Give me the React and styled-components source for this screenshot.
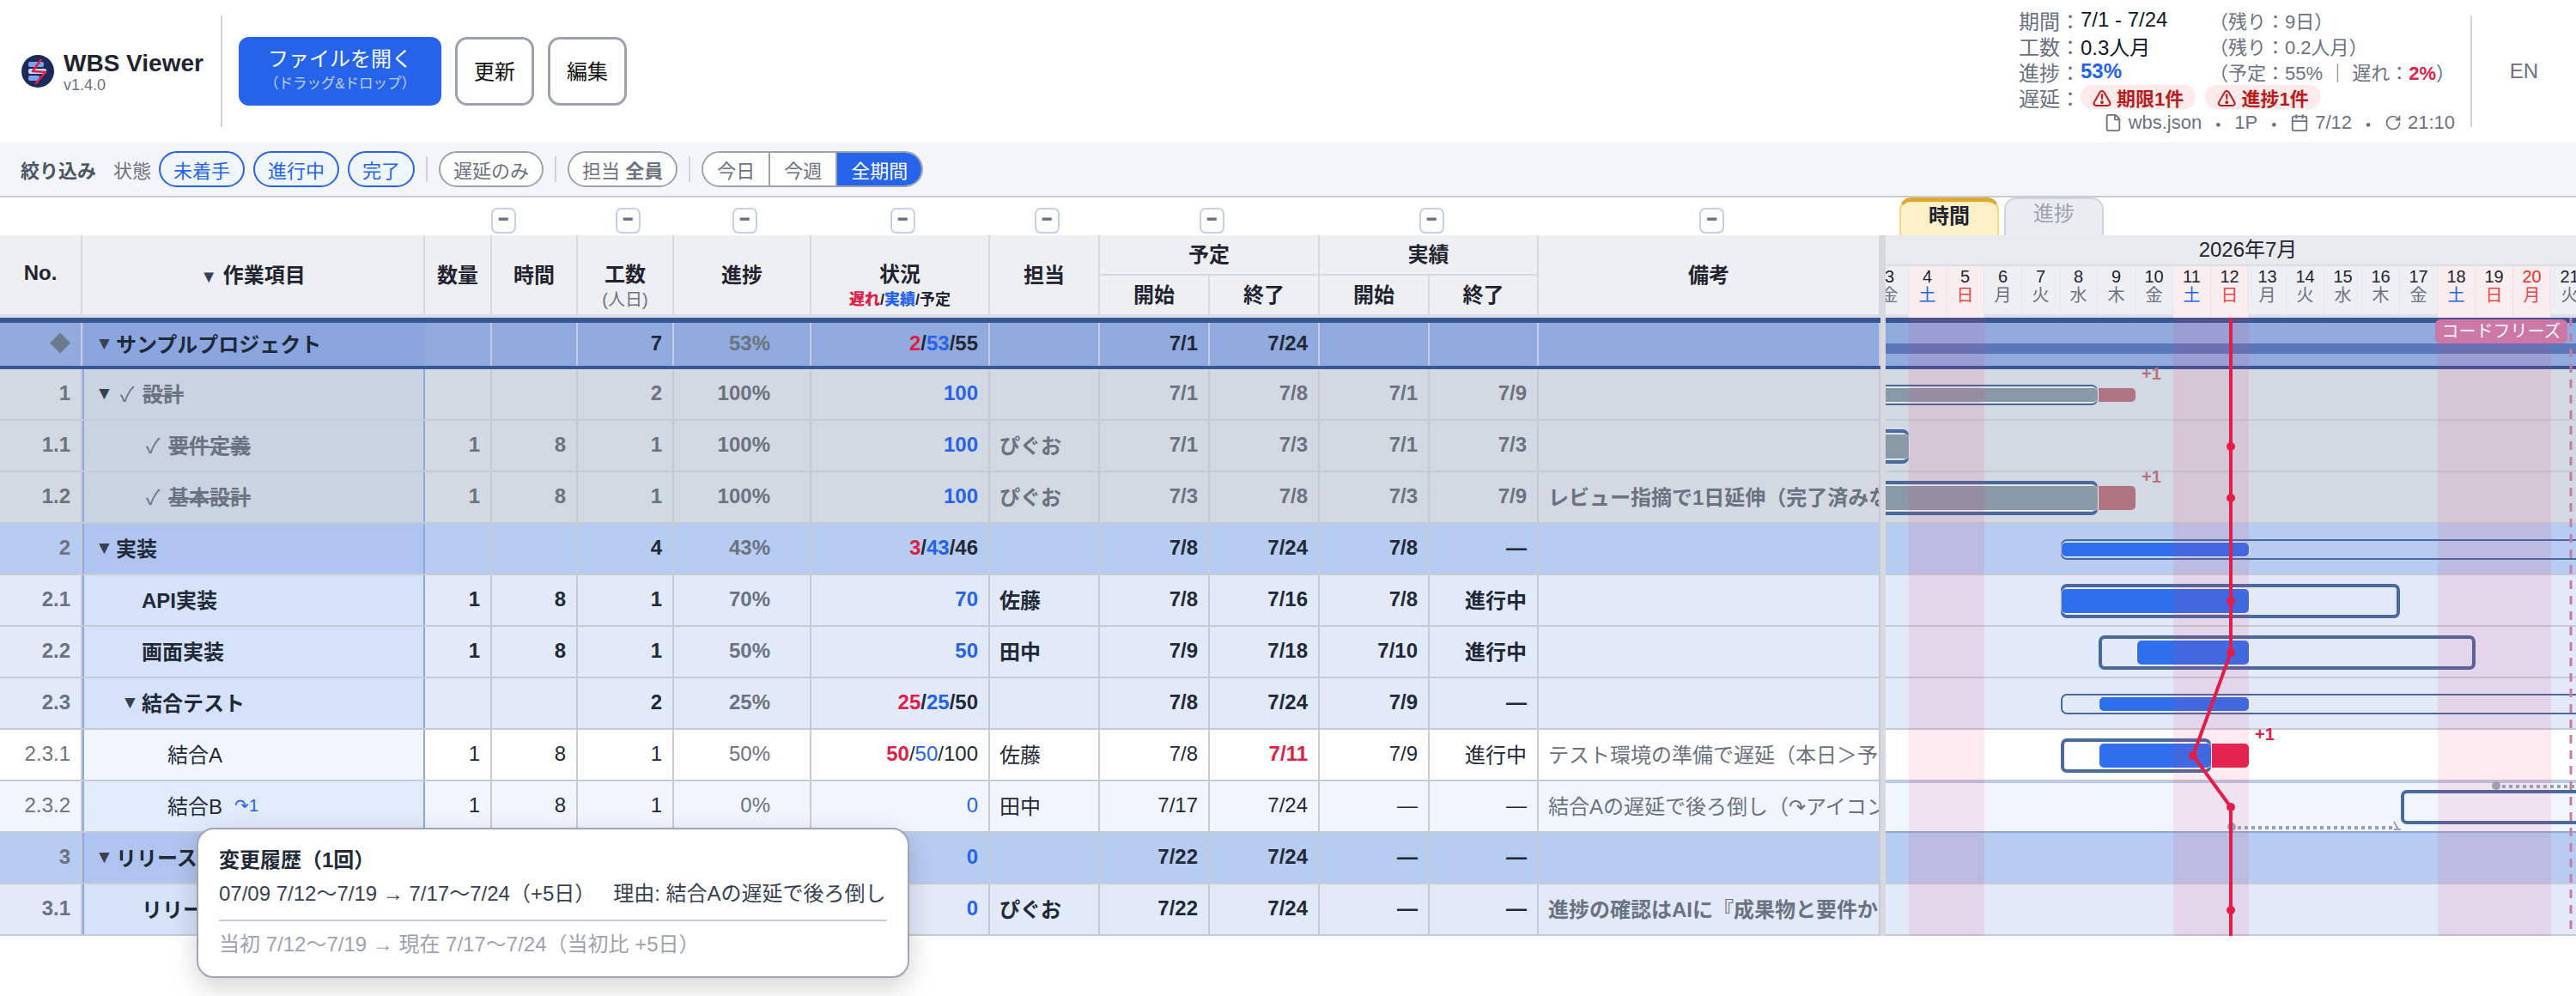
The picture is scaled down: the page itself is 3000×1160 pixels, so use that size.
import styled, { createGlobalStyle } from 'styled-components';
import { Calendar, File, RotateCw } from 'lucide-react';

const COLS = '96px 399px 78px 100px 112px 160px 208px 128px 128px 128px 128px 127px 1fr';

// 行の種類ごとの背景色
const ROW_THEME = {
    project: { bg: '#91abdf', item: '#8ba6df', line: '#c3cde4', text: '#1f2937' },
    done: { bg: '#d3d9e2', item: '#c9d3e2', line: '#c6cad5', text: '#6b7280' },
    group: { bg: '#b7ccf1', item: '#afc5ef', line: '#c6cad5', text: '#1f2937' },
    task: { bg: '#e2e9f9', item: '#d5e2fa', line: '#c6cad5', text: '#1f2937' },
    leaf: { bg: '#ffffff', item: '#f1f6fe', line: '#c6cad5', text: '#1f2937' },
    leafAlt: { bg: '#f1f6fe', item: '#e2ebfb', line: '#c6cad5', text: '#1f2937' },
};

const DAY_NAMES = ['金', '土', '日', '月', '火', '水', '木'];
const HOLIDAYS = [20];

const xOf = (day) => 44 * day - 149;

const GlobalStyle = createGlobalStyle`
    html, body {
        margin: 0;
        background: #fff;
    }
    body {
        font-family: "Liberation Sans", "Noto Sans CJK JP", sans-serif;
        font-size: 24px;
        color: #1f2937;
    }
    * {
        box-sizing: border-box;
    }
`;

const Page = styled.div`
    position: relative;
    width: 3000px;
    height: 1160px;
    overflow: hidden;
`;

const Header = styled.header`
    display: flex;
    align-items: center;
    height: 166px;
`;

const Brand = styled.div`
    display: flex;
    align-items: center;
    gap: 11px;
    width: 257px;
    padding-left: 25px;
`;

const BrandText = styled.div`
    display: flex;
    flex-direction: column;
`;

const BrandName = styled.div`
    font-size: 28px;
    font-weight: 700;
    line-height: 32px;
    color: #1f2430;
`;

const BrandVersion = styled.div`
    font-size: 18px;
    line-height: 18px;
    color: #6b7280;
`;

const VDivider = styled.div`
    flex: none;
    width: 2px;
    height: 130px;
    background: #d1d5db;
`;

const HeaderActions = styled.div`
    display: flex;
    gap: 16px;
    margin-left: 19px;
`;

const OpenButton = styled.button`
    display: flex;
    flex-direction: column;
    align-items: center;
    justify-content: center;
    width: 236px;
    height: 80px;
    padding: 0 0 4px;
    border: none;
    border-radius: 12px;
    background: #2563eb;
    color: #fff;
    font: inherit;
    line-height: 32px;
`;

const OpenHint = styled.span`
    font-size: 16.5px;
    line-height: 24px;
    opacity: 0.7;
`;

const PlainButton = styled.button`
    width: 92px;
    height: 80px;
    padding: 0 0 3px;
    border: 3px solid #9ca3af;
    border-radius: 14px;
    background: #fff;
    color: #111;
    font: inherit;
`;

const Summary = styled.div`
    display: grid;
    grid-template-columns: 72px 150px 1fr;
    grid-auto-rows: 30px;
    align-items: center;
    width: 506px;
    margin-left: auto;
    margin-right: 20px;
    white-space: nowrap;
`;

const SummaryLabel = styled.span`
    color: #6b7280;
`;

const SummaryValue = styled.span`
    color: #111827;
`;

const SummaryNote = styled.span`
    font-size: 22px;
    color: #6b7280;
`;

const Accent = styled.b`
    color: ${(props) => props.$color};
`;

const PillRow = styled.div`
    display: flex;
    gap: 11px;
    grid-column: 2 / 4;
`;

const Pill = styled.span`
    display: flex;
    align-items: center;
    gap: 6px;
    height: 28px;
    padding: 0 14px;
    border-radius: 14px;
    background: #fdeaea;
    color: #b91c1c;
    font-size: 22px;
    font-weight: 700;
`;

const MetaRow = styled.div`
    display: flex;
    align-items: center;
    justify-content: flex-end;
    gap: 7px;
    grid-column: 1 / 4;
    font-size: 22px;
    color: #6b7280;
`;

const MetaDot = styled.span`
    margin: 0 1px;
`;

const LangSwitch = styled.div`
    flex: none;
    width: 121px;
    text-align: center;
    color: #6b7280;
`;

const FilterBar = styled.div`
    display: flex;
    align-items: center;
    height: 64px;
    padding-left: 24px;
    border-bottom: 2px solid #c8cad4;
    background: #f4f5f9;
    font-size: 22px;
    white-space: nowrap;
`;

const FilterTitle = styled.b`
    width: 108px;
    color: #4b5563;
`;

const FilterLabel = styled.span`
    width: 53px;
    color: #6b7280;
`;

const Chip = styled.span`
    display: flex;
    align-items: center;
    height: 42px;
    margin-right: 10px;
    padding: 0 15px;
    border: 2px solid ${(props) => (props.$active ? '#2563eb' : '#9ca3af')};
    border-radius: 21px;
    background: ${(props) => (props.$active ? '#eff6ff' : '#fff')};
    color: ${(props) => (props.$active ? '#2563eb' : '#6b7280')};
`;

const FilterDivider = styled.span`
    width: 2px;
    height: 30px;
    margin: 0 13px 0 3px;
    background: #d1d5db;
`;

const Segments = styled.div`
    display: flex;
    height: 42px;
    border: 2px solid #9ca3af;
    border-radius: 21px;
    overflow: hidden;
`;

const Segment = styled.span`
    display: flex;
    align-items: center;
    padding: 0 16px;
    border-right: 2px solid #9ca3af;
    background: ${(props) => (props.$active ? '#2563eb' : '#fff')};
    color: ${(props) => (props.$active ? '#fff' : '#6b7280')};

    &:last-child {
        border-right: none;
    }
`;

const Main = styled.div`
    display: flex;
    align-items: flex-start;
`;

const TableSide = styled.div`
    width: 2190px;
`;

const Splitter = styled.div`
    width: 6px;
    height: 816px;
    margin-top: 44px;
    background: #d7d9df;
`;

const CollapseRow = styled.div`
    display: grid;
    grid-template-columns: 495px 178px 112px 160px 208px 128px 256px 256px 1fr;
    align-items: center;
    height: 44px;
    padding-top: 10px;
`;

const CollapseButton = styled.button`
    justify-self: center;
    width: 29px;
    height: 30px;
    margin-left: 4px;
    padding: 0 0 4px;
    border: 2px solid #c5d0e0;
    border-radius: 7px;
    background: #fff;
    color: #6b7280;
    font: 700 20px "Liberation Sans", sans-serif;
    line-height: 20px;
    -webkit-text-stroke: 1px #6b7280;
`;

const TableHead = styled.div`
    display: grid;
    grid-template-columns: ${COLS};
    grid-template-rows: 47px 45px;
    height: 96px;
    border-bottom: 4px solid #dcdde2;
    background: #eeeff3;
    font-weight: 700;
    color: #1f2430;
`;

const HeadCell = styled.div`
    display: flex;
    flex-direction: column;
    align-items: center;
    justify-content: center;
    grid-row: ${(props) => props.$row || '1 / 3'};
    grid-column: ${(props) => props.$col || 'auto'};
    padding-bottom: 4px;
    border-right: 2px solid #d7d9df;
    border-bottom: ${(props) => (props.$group ? '2px solid #d7d9df' : 'none')};
`;

const HeadToggle = styled.span`
    font-size: 20px;
    color: #374151;
`;

const HeadSub = styled.span`
    height: 0;
    margin-top: 2px;
    font-size: ${(props) => props.$size || 20}px;
    font-weight: ${(props) => props.$weight || 400};
    line-height: 24px;
    white-space: nowrap;
    color: ${(props) => props.$color || 'inherit'};
`;

const Row = styled.div`
    display: grid;
    grid-template-columns: ${COLS};
    height: 60px;
    border-top: ${(props) => (props.$variant === 'project' ? '6px solid #3b5694' : 'none')};
    border-bottom: ${(props) => (props.$variant === 'project' ? '4px solid #3b5694' : '2px solid #c6cad5')};
    background: ${(props) => ROW_THEME[props.$variant].bg};
    color: ${(props) => ROW_THEME[props.$variant].text};
    font-weight: ${(props) => (props.$bold ? 700 : 400)};
    white-space: nowrap;
`;

const Cell = styled.div`
    display: flex;
    align-items: center;
    justify-content: ${(props) => (props.$left ? 'flex-start' : 'flex-end')};
    overflow: hidden;
    padding: ${(props) => (props.$left ? '0 0 3px 11px' : `0 ${props.$pad || 12}px 3px 0`)};
    border-right: 2px solid ${(props) => ROW_THEME[props.$variant].line};
    color: ${(props) => props.$color || 'inherit'};
    font-weight: ${(props) => (props.$strong ? 700 : 'inherit')};
`;

const ItemCell = styled.div`
    display: flex;
    align-items: center;
    overflow: hidden;
    padding-left: ${(props) => 15 + (props.$level - 1) * 30}px;
    padding-bottom: 3px;
    border-left: 2px solid #8ea8dc;
    border-right: 2px solid #8ea8dc;
    background: ${(props) => ROW_THEME[props.$variant].item};
    color: ${(props) => (props.$variant === 'done' ? '#6b7280' : '#1f2937')};
`;

const Toggle = styled.span`
    flex: none;
    width: 24px;
    margin-left: -2px;
    font-size: 21px;
    color: #374151;
`;

const CheckMark = styled.span`
    flex: none;
    width: 31px;
    padding-left: 5px;
    font-weight: 400;
`;

const ItemName = styled.span`
    text-decoration: ${(props) => (props.$done ? 'line-through' : 'none')};
    text-decoration-thickness: 2px;
`;

const ChangeMark = styled.span`
    margin-left: 14px;
    font-size: 20px;
    color: #2563eb;
`;

const Diamond = styled.span`
    width: 24px;
    height: 24px;
    background: #6b7a8f;
    clip-path: polygon(50% 0, 100% 50%, 50% 100%, 0 50%);
`;

const GanttSide = styled.div`
    flex: 1;
    width: 804px;
    overflow: hidden;
`;

const TabRow = styled.div`
    display: flex;
    gap: 6px;
    height: 44px;
    padding-left: 16px;
`;

const Tab = styled.div`
    display: flex;
    align-items: center;
    justify-content: center;
    width: 116px;
    padding-bottom: ${(props) => (props.$active ? 10 : 13)}px;
    border: 2px solid ${(props) => (props.$active ? '#f3d98b' : '#cdd5e0')};
    border-top: ${(props) => (props.$active ? '5px solid #e0a830' : '2px solid #cdd5e0')};
    border-bottom: none;
    border-radius: 14px 14px 0 0;
    background: ${(props) => (props.$active ? '#fef0c7' : '#e9ecf1')};
    color: ${(props) => (props.$active ? '#1f2430' : '#9ca3af')};
    font-weight: ${(props) => (props.$active ? 700 : 400)};
`;

const MonthRow = styled.div`
    height: 36px;
    padding-left: 40px;
    border-bottom: 2px solid #dcdde2;
    background: #e9eaee;
    line-height: 34px;
    text-align: center;
    color: #1f2430;
`;

const DayRow = styled.div`
    display: flex;
    height: 60px;
    margin-left: -17px;
`;

const DayCell = styled.div`
    display: flex;
    flex: none;
    flex-direction: column;
    align-items: center;
    width: 44px;
    padding-top: 1px;
    border-right: 1px solid #e4e5ea;
    border-bottom: ${(props) => (props.$off ? 'none' : '4px solid #dfe0e5')};
    background: ${(props) => (props.$off ? '#f9edf0' : '#eeeff3')};
    font-size: 20px;
    line-height: 22px;
`;

const DayNumber = styled.span`
    color: ${(props) => (props.$holiday ? '#ef2b2b' : '#1f2430')};
`;

const DayName = styled.span`
    color: ${(props) => props.$color};
`;

const GanttBody = styled.div`
    position: relative;
`;

const GanttRow = styled.div`
    position: relative;
    height: 60px;
    border-top: ${(props) => (props.$variant === 'project' ? '6px solid #3b5694' : 'none')};
    border-bottom: ${(props) => (props.$variant === 'project' ? '4px solid #3b5694' : `2px solid ${props.$linked ? '#8ea6d8' : '#c6cad5'}`)};
    background: ${(props) => ROW_THEME[props.$variant].bg};
    box-shadow: ${(props) => (props.$linked ? 'inset 0 2px 0 #b6c9ee' : 'none')};
`;

const ProjectBar = styled.div`
    position: absolute;
    top: 24px;
    left: 0;
    right: 0;
    height: 12px;
    background: #5b77b8;
`;

const PlanBar = styled.div`
    position: absolute;
    top: ${(props) => (props.$summary ? 18 : 10)}px;
    height: ${(props) => (props.$summary ? 24 : 40)}px;
    border: ${(props) => (props.$summary ? 2 : 4)}px solid #4a6a9e;
    border-radius: 7px;
`;

const FillBar = styled.div`
    position: absolute;
    top: ${(props) => (props.$summary ? 22 : 16)}px;
    height: ${(props) => (props.$summary ? 16 : 28)}px;
    border-radius: 5px;
    background: ${(props) => (props.$done ? '#8a99a8' : '#2f6fed')};
    box-shadow: 0 0 0 1px rgba(255, 255, 255, 0.55);
`;

const LateBar = styled.div`
    position: absolute;
    top: ${(props) => (props.$summary ? 22 : 16)}px;
    height: ${(props) => (props.$summary ? 16 : 28)}px;
    border-radius: 0 5px 5px 0;
    background: ${(props) => (props.$done ? '#b07480' : '#e4224d')};
`;

const LateLabel = styled.span`
    position: absolute;
    top: -6px;
    font-size: 20px;
    font-weight: 700;
    line-height: 22px;
    color: ${(props) => (props.$done ? '#b8727f' : '#e11d48')};
`;

const WeekendBand = styled.div`
    position: absolute;
    top: 0;
    height: 720px;
    background: rgba(240, 47, 106, 0.1);
`;

const ChartLines = styled.svg`
    position: absolute;
    top: 0;
    left: 0;
`;

const FreezeTag = styled.div`
    position: absolute;
    top: 2px;
    left: 640px;
    width: 154px;
    height: 28px;
    border-radius: 6px;
    background: #cc77a5;
    color: #fff;
    font-size: 20px;
    line-height: 28px;
    text-align: center;
`;

const Tooltip = styled.div`
    position: absolute;
    top: 964px;
    left: 229px;
    width: 830px;
    height: 175px;
    padding: 21px 24px 0;
    border: 2px solid #a0a5b0;
    border-radius: 20px;
    background: #fff;
    box-shadow: 0 10px 30px rgba(0, 0, 0, 0.18);
    line-height: 30px;
    white-space: nowrap;
`;

const TooltipTitle = styled.div`
    font-weight: 700;
    color: #1f2937;
`;

const TooltipLine = styled.div`
    display: flex;
    gap: 21px;
    margin-top: 9px;
    padding-bottom: 15px;
    border-bottom: 2px solid #c8ccd6;
    color: #374151;
`;

const TooltipFoot = styled.div`
    margin-top: 12px;
    color: #9ca3af;
`;

const DAYS = Array.from({ length: 20 }, (_, i) => i + 3);

const dayNameColor = (day) => {
    const name = DAY_NAMES[(day - 3) % 7];
    if (HOLIDAYS.includes(day) || name === '日') return '#ef4444';
    if (name === '土') return '#2563eb';
    return '#6b7280';
};

const isOff = (day) => ['土', '日'].includes(DAY_NAMES[(day - 3) % 7]) || HOLIDAYS.includes(day);

const RED = '#e11d48';
const BLUE = '#2563eb';

const ROWS = [
    { no: '', name: 'サンプルプロジェクト', variant: 'project', bold: true, level: 1, toggle: true, effort: '7', progress: '53%', status: [['2', RED], ['/'], ['53', BLUE], ['/55']], ps: '7/1', pe: '7/24' },
    { no: '1', name: '設計', variant: 'done', bold: true, level: 1, toggle: true, check: true, effort: '2', progress: '100%', status: [['100', BLUE]], ps: '7/1', pe: '7/8', as: '7/1', ae: '7/9', plan: [1, 9], fill: [1, 9], late: [9, 10], summary: true },
    { no: '1.1', name: '要件定義', variant: 'done', bold: true, level: 2, check: true, qty: '1', hrs: '8', effort: '1', progress: '100%', status: [['100', BLUE]], owner: 'ぴぐお', ps: '7/1', pe: '7/3', as: '7/1', ae: '7/3', plan: [1, 4], fill: [1, 4] },
    { no: '1.2', name: '基本設計', variant: 'done', bold: true, level: 2, check: true, qty: '1', hrs: '8', effort: '1', progress: '100%', status: [['100', BLUE]], owner: 'ぴぐお', ps: '7/3', pe: '7/8', as: '7/3', ae: '7/9', note: 'レビュー指摘で1日延伸（完了済みなので問題なし）', plan: [3, 9], fill: [3, 9], late: [9, 10] },
    { no: '2', name: '実装', variant: 'group', bold: true, level: 1, toggle: true, effort: '4', progress: '43%', status: [['3', RED], ['/'], ['43', BLUE], ['/46']], ps: '7/8', pe: '7/24', as: '7/8', ae: '—', plan: [8, 25], fill: [8, 13], summary: true },
    { no: '2.1', name: 'API実装', variant: 'task', bold: true, level: 2, qty: '1', hrs: '8', effort: '1', progress: '70%', status: [['70', BLUE]], owner: '佐藤', ps: '7/8', pe: '7/16', as: '7/8', ae: '進行中', plan: [8, 17], fill: [8, 13] },
    { no: '2.2', name: '画面実装', variant: 'task', bold: true, level: 2, qty: '1', hrs: '8', effort: '1', progress: '50%', status: [['50', BLUE]], owner: '田中', ps: '7/9', pe: '7/18', as: '7/10', ae: '進行中', plan: [9, 19], fill: [10, 13] },
    { no: '2.3', name: '結合テスト', variant: 'task', bold: true, level: 2, toggle: true, effort: '2', progress: '25%', status: [['25', RED], ['/'], ['25', BLUE], ['/50']], ps: '7/8', pe: '7/24', as: '7/9', ae: '—', plan: [8, 25], fill: [9, 13], summary: true },
    { no: '2.3.1', name: '結合A', variant: 'leaf', level: 3, qty: '1', hrs: '8', effort: '1', progress: '50%', status: [['50', RED], ['/'], ['50', BLUE], ['/100']], owner: '佐藤', ps: '7/8', pe: '7/11', peLate: true, as: '7/9', ae: '進行中', note: 'テスト環境の準備で遅延（本日＞予定', plan: [8, 12], fill: [9, 12], late: [12, 13] },
    { no: '2.3.2', name: '結合B', variant: 'leafAlt', linked: true, level: 3, changes: '↷1', qty: '1', hrs: '8', effort: '1', progress: '0%', status: [['0', BLUE]], owner: '田中', ps: '7/17', pe: '7/24', as: '—', ae: '—', note: '結合Aの遅延で後ろ倒し（↷アイコン', plan: [17, 25] },
    { no: '3', name: 'リリース', variant: 'group', bold: true, level: 1, toggle: true, status: [['0', BLUE]], ps: '7/22', pe: '7/24', as: '—', ae: '—' },
    { no: '3.1', name: 'リリー', variant: 'task', bold: true, level: 2, status: [['0', BLUE]], owner: 'ぴぐお', ps: '7/22', pe: '7/24', as: '—', ae: '—', note: '進捗の確認はAIに『成果物と要件か' },
];

const Logo = () => (
    <svg width="38" height="38" viewBox="0 0 38 38">
        <circle cx="19" cy="19" r="19" fill="#1c2a5a" />
        <rect x="8" y="8" width="18" height="6" rx="2" fill="#7aa2ee" />
        <rect x="8" y="16" width="21" height="6" rx="2" fill="#c9d8f7" />
        <rect x="8" y="24" width="13" height="6" rx="2" fill="#7aa2ee" />
        <path d="M23 5 L13 19 L28 20 L16 34" fill="none" stroke="#e11d48" strokeWidth="2.6" strokeLinejoin="round" />
    </svg>
);

const TableRow = ({ row }) => {
    const v = row.variant;
    return (
        <Row $variant={v} $bold={row.bold}>
            <Cell $variant={v} $color={v === 'project' ? undefined : '#6b7280'}>
                {v === 'project' ? <Diamond /> : row.no}
            </Cell>
            <ItemCell $variant={v} $level={row.level}>
                <Toggle>{row.toggle ? '▼' : ''}</Toggle>
                {row.check && <CheckMark>✓</CheckMark>}
                <ItemName $done={row.check}>{row.name}</ItemName>
                {row.changes && <ChangeMark>{row.changes}</ChangeMark>}
            </ItemCell>
            <Cell $variant={v}>{row.qty}</Cell>
            <Cell $variant={v}>{row.hrs}</Cell>
            <Cell $variant={v}>{row.effort}</Cell>
            <Cell $variant={v} $pad={46} $color="#6b7280">
                {row.progress}
            </Cell>
            <Cell $variant={v}>
                <span>
                    {row.status.map(([text, color]) =>
                        color ? (
                            <Accent key={text + color} $color={color} style={color === BLUE && !row.bold ? { fontWeight: 400 } : undefined}>
                                {text}
                            </Accent>
                        ) : (
                            <span key={text}>{text}</span>
                        )
                    )}
                </span>
            </Cell>
            <Cell $variant={v} $left>
                {row.owner}
            </Cell>
            <Cell $variant={v}>{row.ps}</Cell>
            <Cell $variant={v} $color={row.peLate ? RED : undefined} $strong={row.peLate}>
                {row.pe}
            </Cell>
            <Cell $variant={v}>{row.as}</Cell>
            <Cell $variant={v}>{row.ae}</Cell>
            <Cell $variant={v} $left $color="#6b7280">
                {row.note}
            </Cell>
        </Row>
    );
};

const GanttLine = ({ row }) => {
    const done = row.variant === 'done';
    const span = ([from, to], inset = 1) => ({ left: xOf(from) + inset, width: xOf(to) - xOf(from) - inset });
    return (
        <GanttRow $variant={row.variant} $linked={row.linked}>
            {row.variant === 'project' && <ProjectBar />}
            {row.plan && <PlanBar $summary={row.summary} style={span(row.plan)} />}
            {row.fill && <FillBar $summary={row.summary} $done={done} style={span(row.fill, 2)} />}
            {row.late && <LateBar $summary={row.summary} $done={done} style={span(row.late)} />}
            {row.late && (
                <LateLabel $done={done} style={{ left: xOf(row.late[1]) + 7 }}>
                    +1
                </LateLabel>
            )}
        </GanttRow>
    );
};

const WEEKENDS = [
    [4, 6],
    [11, 13],
    [18, 21],
];

const PROGRESS_DOTS = [
    [402, 150],
    [402, 210],
    [402, 330],
    [402, 390],
    [358, 510],
    [402, 570],
    [402, 690],
];

const App = () => (
    <Page>
        <GlobalStyle />
        <Header>
            <Brand>
                <Logo />
                <BrandText>
                    <BrandName>WBS Viewer</BrandName>
                    <BrandVersion>v1.4.0</BrandVersion>
                </BrandText>
            </Brand>
            <VDivider />
            <HeaderActions>
                <OpenButton>
                    ファイルを開く
                    <OpenHint>（ドラッグ&ドロップ）</OpenHint>
                </OpenButton>
                <PlainButton>更新</PlainButton>
                <PlainButton>編集</PlainButton>
            </HeaderActions>
            <Summary>
                <SummaryLabel>期間：</SummaryLabel>
                <SummaryValue>7/1 - 7/24</SummaryValue>
                <SummaryNote>（残り：9日）</SummaryNote>
                <SummaryLabel>工数：</SummaryLabel>
                <SummaryValue>0.3人月</SummaryValue>
                <SummaryNote>（残り：0.2人月）</SummaryNote>
                <SummaryLabel>進捗：</SummaryLabel>
                <Accent $color="#2563eb">53%</Accent>
                <SummaryNote>
                    （予定：55% ｜ 遅れ：<Accent $color="#e11d48">2%</Accent>）
                </SummaryNote>
                <SummaryLabel>遅延：</SummaryLabel>
                <PillRow>
                    <Pill>⚠ 期限1件</Pill>
                    <Pill>⚠ 進捗1件</Pill>
                </PillRow>
                <MetaRow>
                    <File size={22} />
                    wbs.json
                    <MetaDot>・</MetaDot>
                    1P
                    <MetaDot>・</MetaDot>
                    <Calendar size={22} />
                    7/12
                    <MetaDot>・</MetaDot>
                    <RotateCw size={20} />
                    21:10
                </MetaRow>
            </Summary>
            <VDivider />
            <LangSwitch>EN</LangSwitch>
        </Header>

        <FilterBar>
            <FilterTitle>絞り込み</FilterTitle>
            <FilterLabel>状態</FilterLabel>
            <Chip $active>未着手</Chip>
            <Chip $active>進行中</Chip>
            <Chip $active>完了</Chip>
            <FilterDivider />
            <Chip>遅延のみ</Chip>
            <FilterDivider />
            <Chip>
                担当&nbsp;<b>全員</b>
            </Chip>
            <FilterDivider />
            <Segments>
                <Segment>今日</Segment>
                <Segment>今週</Segment>
                <Segment $active>全期間</Segment>
            </Segments>
        </FilterBar>

        <Main>
            <TableSide>
                <CollapseRow>
                    <span />
                    {Array.from({ length: 8 }, (_, i) => (
                        <CollapseButton key={i}>−</CollapseButton>
                    ))}
                </CollapseRow>
                <TableHead>
                    <HeadCell>No.</HeadCell>
                    <HeadCell>
                        <span>
                            <HeadToggle>▼</HeadToggle> 作業項目
                        </span>
                    </HeadCell>
                    <HeadCell>数量</HeadCell>
                    <HeadCell>時間</HeadCell>
                    <HeadCell>
                        工数
                        <HeadSub $color="#6b7280">(人日)</HeadSub>
                    </HeadCell>
                    <HeadCell>進捗</HeadCell>
                    <HeadCell>
                        状況
                        <HeadSub $size={18} $weight={700}>
                            <Accent $color="#e11d48">遅れ</Accent>/<Accent $color="#2563eb">実績</Accent>/予定
                        </HeadSub>
                    </HeadCell>
                    <HeadCell>担当</HeadCell>
                    <HeadCell $col="span 2" $row="1" $group>
                        予定
                    </HeadCell>
                    <HeadCell $col="span 2" $row="1" $group>
                        実績
                    </HeadCell>
                    <HeadCell>備考</HeadCell>
                    <HeadCell $col="9" $row="2">
                        開始
                    </HeadCell>
                    <HeadCell $col="10" $row="2">
                        終了
                    </HeadCell>
                    <HeadCell $col="11" $row="2">
                        開始
                    </HeadCell>
                    <HeadCell $col="12" $row="2">
                        終了
                    </HeadCell>
                </TableHead>
                {ROWS.map((row) => (
                    <TableRow key={row.no + row.name} row={row} />
                ))}
            </TableSide>
            <Splitter />
            <GanttSide>
                <TabRow>
                    <Tab $active>時間</Tab>
                    <Tab>進捗</Tab>
                </TabRow>
                <MonthRow>2026年7月</MonthRow>
                <DayRow>
                    {DAYS.map((day) => (
                        <DayCell key={day} $off={isOff(day)}>
                            <DayNumber $holiday={HOLIDAYS.includes(day)}>{day}</DayNumber>
                            <DayName $color={dayNameColor(day)}>{DAY_NAMES[(day - 3) % 7]}</DayName>
                        </DayCell>
                    ))}
                </DayRow>
                <GanttBody>
                    {ROWS.map((row) => (
                        <GanttLine key={row.no + row.name} row={row} />
                    ))}
                    {WEEKENDS.map(([from, to]) => (
                        <WeekendBand key={from} style={{ left: xOf(from), width: xOf(to) - xOf(from) }} />
                    ))}
                    <FreezeTag>コードフリーズ</FreezeTag>
                    <ChartLines width="804" height="722" viewBox="0 0 804 722">
                        <line x1="798" y1="0" x2="798" y2="722" stroke="#c97aa8" strokeWidth="3" strokeDasharray="10 8" />
                        <line x1="410" y1="594" x2="592" y2="594" stroke="#9aa0b0" strokeWidth="4" strokeDasharray="4 4" />
                        <circle cx="403" cy="593" r="5" fill="#9aa0b0" />
                        <path d="M592 587 L597 596 M592 596 H600" fill="none" stroke="#9aa0b0" strokeWidth="2" />
                        <line x1="718" y1="546" x2="804" y2="546" stroke="#9aa0b0" strokeWidth="4" strokeDasharray="4 4" />
                        <circle cx="711" cy="545" r="5" fill="#9aa0b0" />
                        <polyline points="402,0 402,390 358,510 402,570 402,720" fill="none" stroke="#e11d48" strokeWidth="4" />
                        {PROGRESS_DOTS.map(([x, y]) => (
                            <circle key={y} cx={x} cy={y} r="5" fill="#e11d48" />
                        ))}
                    </ChartLines>
                </GanttBody>
            </GanttSide>
        </Main>

        <Tooltip>
            <TooltipTitle>変更履歴（1回）</TooltipTitle>
            <TooltipLine>
                <span>07/09 7/12〜7/19 → 7/17〜7/24（+5日）</span>
                <span>理由: 結合Aの遅延で後ろ倒し</span>
            </TooltipLine>
            <TooltipFoot>当初 7/12〜7/19 → 現在 7/17〜7/24（当初比 +5日）</TooltipFoot>
        </Tooltip>
    </Page>
);

export default App;
